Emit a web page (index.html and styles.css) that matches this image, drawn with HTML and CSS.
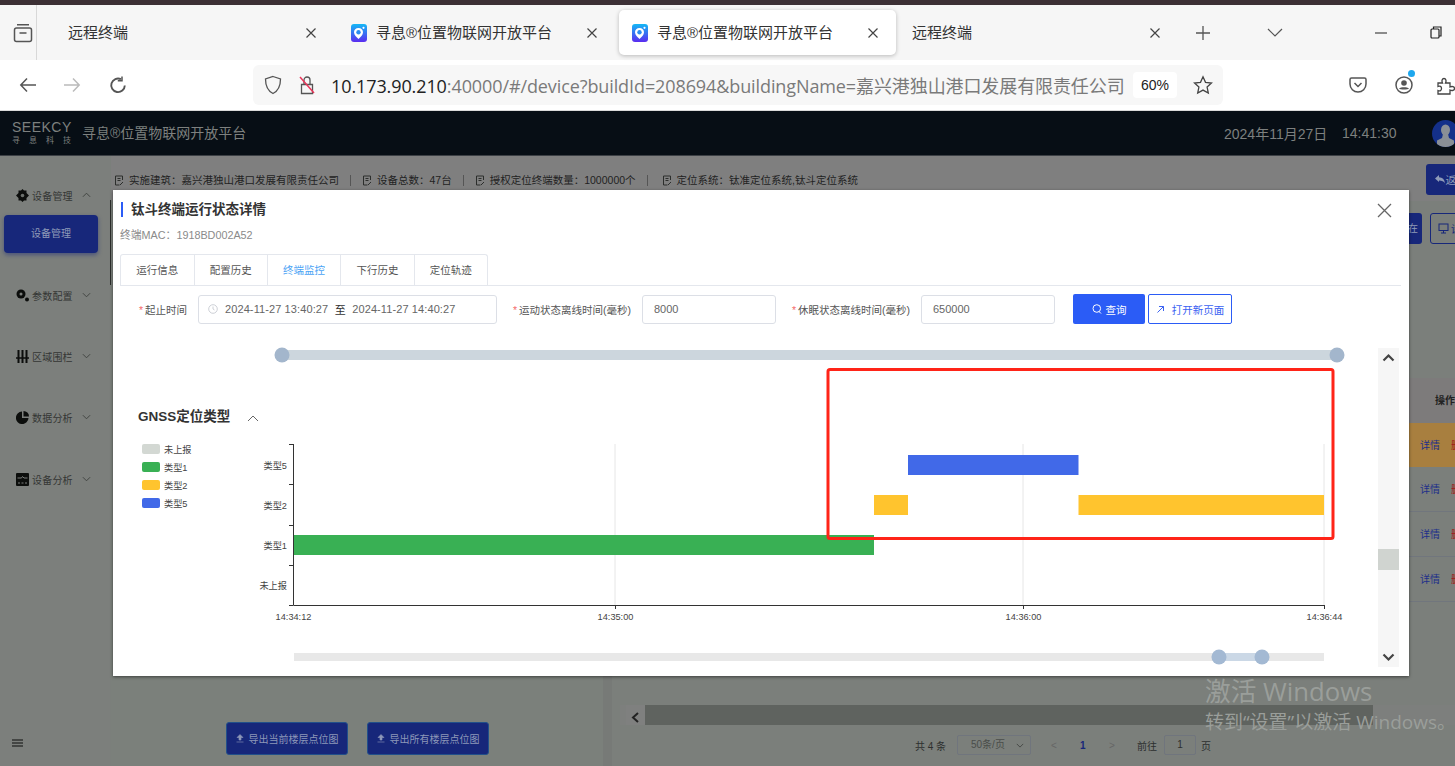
FILE: index.html
```html
<!DOCTYPE html>
<html lang="zh-CN">
<head>
    <meta charset="UTF-8">
    <title>寻息®位置物联网开放平台</title>
    <link rel="stylesheet" href="styles.css">
</head>
<body>
    <svg class="defs" width="0" height="0">
        <defs>
            <linearGradient id="logoGrad" x1="0.5" y1="0" x2="0.5" y2="1">
                <stop offset="0" stop-color="#14b8f5"/>
                <stop offset="1" stop-color="#5a2cf0"/>
            </linearGradient>
            <symbol id="siteLogo" viewBox="0 0 16 18">
                <rect x="0" y="0" width="16" height="18" rx="3" fill="url(#logoGrad)"/>
                <path d="M7.500 4C4.800 4 3 5.900 3 8.300c0 2.700 2.600 4.900 4.500 6.700C9.400 13.200 12 11 12 8.300 12 5.900 10.200 4 7.500 4z" fill="#fff"/>
                <circle cx="7.500" cy="8.300" r="2.200" fill="#2b8df0"/>
                <circle cx="12.500" cy="3.800" r="1.100" fill="#fff"/>
            </symbol>
            <symbol id="closeX" viewBox="0 0 12 12">
                <path d="M1.500 1.500l9 9M10.500 1.500l-9 9" stroke="#444" stroke-width="1.200" fill="none"/>
            </symbol>
            <symbol id="chevDown" viewBox="0 0 10 6">
                <path d="M1 1l4 4 4-4" stroke="#3c3f3c" stroke-width="1" fill="none"/>
            </symbol>
            <symbol id="docIcon" viewBox="0 0 10 11">
                <path d="M1.500 1h7v4M1.500 1v9h4M3.500 3.500h3M3.500 5.500h3M6 10l3-3" stroke="#2c2e2c" fill="none"/>
            </symbol>
        </defs>
    </svg>

    <div class="tabstrip">
        <div class="launcher">
            <svg width="20" height="20" viewBox="0 0 20 20" fill="none" stroke="#555" stroke-width="1.500"><rect x="1.500" y="5" width="17" height="13.500" rx="2"/><path d="M4 1.800h12M6.500 10h7"/></svg>
        </div>
        <div class="tab tab-first">
            <span class="tab-title">远程终端</span>
            <svg class="tab-close" width="12" height="12"><use href="#closeX"/></svg>
        </div>
        <div class="tab tab-second">
            <svg class="tab-logo" width="16" height="18"><use href="#siteLogo"/></svg>
            <span class="tab-title">寻息®位置物联网开放平台</span>
            <svg class="tab-close" width="12" height="12"><use href="#closeX"/></svg>
        </div>
        <div class="tab tab-active">
            <svg class="tab-logo" width="16" height="18"><use href="#siteLogo"/></svg>
            <span class="tab-title">寻息®位置物联网开放平台</span>
            <svg class="tab-close" width="12" height="12"><use href="#closeX"/></svg>
        </div>
        <div class="tab tab-last">
            <span class="tab-title">远程终端</span>
            <svg class="tab-close" width="12" height="12"><use href="#closeX"/></svg>
        </div>
        <svg class="tab-plus" width="16" height="16" viewBox="0 0 16 16"><path d="M8 1v14M1 8h14" stroke="#555" stroke-width="1.300"/></svg>
        <svg class="tab-list" width="16" height="10" viewBox="0 0 16 10"><path d="M1 1l7 7 7-7" stroke="#555" stroke-width="1.200" fill="none"/></svg>
        <svg class="win-min" width="14" height="2" viewBox="0 0 14 2"><path d="M1 1h12" stroke="#444" stroke-width="1.200"/></svg>
        <svg class="win-restore" width="12" height="13" viewBox="0 0 12 13" fill="none" stroke="#222" stroke-width="1.200"><rect x="1" y="3" width="8" height="9" rx="1"/><path d="M3.500 3V1h7.500v9H9"/></svg>
    </div>

    <div class="navbar">
        <svg class="nav-back" width="18" height="16" viewBox="0 0 18 16" fill="none" stroke="#555" stroke-width="1.500"><path d="M17 8H2M8 1.500L1.800 8 8 14.500"/></svg>
        <svg class="nav-forward" width="18" height="16" viewBox="0 0 18 16" fill="none" stroke="#bbb" stroke-width="1.500"><path d="M1 8h15M10 1.500L16.200 8 10 14.500"/></svg>
        <svg class="nav-reload" width="18" height="18" viewBox="0 0 18 18" fill="none" stroke="#555" stroke-width="1.900"><path d="M15.800 9.500A6.800 6.800 0 1 1 12 3.200"/><path d="M13 .5v4.200H8.800" stroke-width="1.500"/></svg>
        <div class="urlbar">
            <svg class="url-shield" width="18" height="20" viewBox="0 0 18 20" fill="none" stroke="#555" stroke-width="1.300"><path d="M9 1.500l7.500 2.500c0 6.500-1.500 11.500-7.500 14.500C3 15.500 1.500 10.500 1.500 4z"/></svg>
            <svg class="url-lock" width="18" height="20" viewBox="0 0 18 20" fill="none"><path d="M3.500 9.500h11v9h-11zM6 9.500V5a3 3 0 0 1 6 0v4.500" stroke="#555" stroke-width="1.300"/><path d="M2 2l14 16" stroke="#e8365a" stroke-width="1.500"/></svg>
            <span class="url-text"><span class="url-host">10.173.90.210</span>:40000/#/device?buildId=208694&amp;buildingName=嘉兴港独山港口发展有限责任公司</span>
            <span class="zoom-chip">60%</span>
            <svg class="url-star" width="20" height="20" viewBox="0 0 20 20" fill="none" stroke="#444" stroke-width="1.300"><path d="M10 1.800l2.500 5.500 6 .7-4.400 4.100 1.200 5.900L10 15.100 4.700 18l1.200-5.900L1.500 8l6-.7z"/></svg>
        </div>
        <svg class="nav-pocket" width="18" height="18" viewBox="0 0 18 18" fill="none" stroke="#555" stroke-width="1.500"><path d="M2.500 2h13A1.500 1.500 0 0 1 17 3.500V8A8 8 0 0 1 1 8V3.500A1.500 1.500 0 0 1 2.500 2z"/><path d="M5.500 7L9 10.500 12.500 7"/></svg>
        <div class="nav-profile">
            <svg width="18" height="18" viewBox="0 0 18 18"><circle cx="9" cy="9" r="8" fill="none" stroke="#555" stroke-width="1.500"/><circle cx="9" cy="7" r="2.800" fill="#555"/><path d="M4 12.500c2-1.800 8-1.800 10 0-1 1.400-9 1.400-10 0z" fill="#555"/></svg>
            <span class="profile-dot"></span>
        </div>
        <svg class="nav-ext" width="20" height="20" viewBox="0 0 20 20" fill="none" stroke="#444" stroke-width="1.300"><path d="M1 8h4.500C4.500 6 5 3.500 7 3.500S9.500 6 8.500 8H13v4c2-1 4.500-.5 4.500 1.500S15 16 13 15v4H1v-3.500c2 1 3.500 0 3.500-2S3 10.500 1 11.500z"/></svg>
    </div>

    <div class="app-header">
        <div class="brand">
            <div class="brand-name">SEEKCY</div>
            <div class="brand-sub">寻息科技</div>
        </div>
        <div class="app-title">寻息®位置物联网开放平台</div>
        <div class="app-date">2024年11月27日</div>
        <div class="app-time">14:41:30</div>
        <div class="avatar">
            <svg width="27" height="27" viewBox="0 0 27 27"><ellipse cx="13.500" cy="10" rx="4.500" ry="5.500" fill="#8a8f96"/><path d="M11 14h5l1 4 5 2.500V27H5v-6.500l5-2.500z" fill="#8a8f96"/></svg>
        </div>
    </div>

    <div class="app-body">
        <aside class="sidebar">
            <div class="side-item side-first">
                <svg class="side-icon" width="13" height="13" viewBox="0 0 13 13"><path d="M6.500 0l1.500 1.500h2.500v2.500L13 6.500 10.500 9v2.500H8L6.500 13 5 11.500H2.500V9L0 6.500 2.500 4V1.500H5z" fill="#0c0e0c"/><circle cx="6.500" cy="6.500" r="1.800" fill="#6c706c"/></svg>
                <span>设备管理</span>
                <svg class="side-chev flip" width="9" height="6"><use href="#chevDown"/></svg>
            </div>
            <div class="side-active">设备管理</div>
            <div class="side-item side-second">
                <svg class="side-icon" width="13" height="13" viewBox="0 0 13 13"><circle cx="5" cy="5" r="4.500" fill="#0c0e0c"/><circle cx="5" cy="5" r="1.500" fill="#7c7f7c"/><circle cx="11" cy="10.500" r="2" fill="#0c0e0c"/></svg>
                <span>参数配置</span>
                <svg class="side-chev" width="9" height="6"><use href="#chevDown"/></svg>
            </div>
            <div class="side-item">
                <svg class="side-icon" width="13" height="13" viewBox="0 0 13 13"><path d="M2.500 0v13M6.500 0v13M10.500 0v13" stroke="#0c0e0c" stroke-width="2"/><path d="M0 8h13" stroke="#0c0e0c" stroke-width="1.500"/></svg>
                <span>区域围栏</span>
                <svg class="side-chev" width="9" height="6"><use href="#chevDown"/></svg>
            </div>
            <div class="side-item">
                <svg class="side-icon" width="13" height="13" viewBox="0 0 13 13"><path d="M6 0.500v6.500h6.500A6.300 6.300 0 1 1 6 .5z" fill="#0c0e0c"/><path d="M7.500 0a5.500 5.500 0 0 1 5.500 5.500H7.500z" fill="#0c0e0c"/></svg>
                <span>数据分析</span>
                <svg class="side-chev" width="9" height="6"><use href="#chevDown"/></svg>
            </div>
            <div class="side-item side-last">
                <svg class="side-icon" width="13" height="13" viewBox="0 0 13 13"><rect width="13" height="13" rx="1" fill="#0c0e0c"/><path d="M1.500 5h4l1-1.500L8 5h3.500M2 10h2M5.500 10h2M9 10h2" stroke="#7c7f7c" fill="none"/></svg>
                <span>设备分析</span>
                <svg class="side-chev" width="9" height="6"><use href="#chevDown"/></svg>
            </div>
            <div class="side-toggle">
                <svg width="11" height="8" viewBox="0 0 11 8"><path d="M0 1h11M0 4h11M0 7h11" stroke="#0c0e0c" stroke-width="1.200"/></svg>
            </div>
        </aside>
        <div class="side-scroll"></div>

        <main class="main">
            <div class="summary">
                <span class="sum-item">
                    <svg width="10" height="11"><use href="#docIcon"/></svg>实施建筑：嘉兴港独山港口发展有限责任公司
                </span>
                <span class="sum-item">
                    <svg width="10" height="11"><use href="#docIcon"/></svg>设备总数：47台
                </span>
                <span class="sum-item">
                    <svg width="10" height="11"><use href="#docIcon"/></svg>授权定位终端数量：1000000个
                </span>
                <span class="sum-item sum-last">
                    <svg width="10" height="11"><use href="#docIcon"/></svg>定位系统：钛准定位系统,钛斗定位系统
                </span>
                <span class="back-btn">
                    <svg width="10" height="9" viewBox="0 0 10 9"><path d="M0 3.500L4 0v2.200c3.500 0 5.500 2 6 6-1.300-2-3-2.800-6-2.800V7z" fill="#8f9bb8"/></svg>返回
                </span>
            </div>

            <div class="panels">
                <section class="left-panel">
                    <span class="export-btn">
                        <svg width="8" height="9" viewBox="0 0 8 9"><path d="M4 .5L1 3.500h2V6h2V3.500h2zM.5 8h7" fill="#8d97b8" stroke="#8d97b8" stroke-width=".6"/></svg>导出当前楼层点位图
                    </span>
                    <span class="export-btn">
                        <svg width="8" height="9" viewBox="0 0 8 9"><path d="M4 .5L1 3.500h2V6h2V3.500h2zM.5 8h7" fill="#8d97b8" stroke="#8d97b8" stroke-width=".6"/></svg>导出所有楼层点位图
                    </span>
                </section>
                <section class="right-panel">
                    <div class="toolbar">
                        <span class="tool-btn tool-solid">在</span>
                        <span class="tool-btn tool-line">
                            <svg width="11" height="11" viewBox="0 0 11 11" fill="none" stroke="#17277a"><rect x="1" y="1" width="9" height="6.500"/><path d="M5.500 7.500V10M3 10h5"/></svg>设备
                        </span>
                    </div>
                    <div class="table">
                        <div class="table-head">操作</div>
                        <div class="table-row row-warn"><span class="link-blue">详情</span><span class="link-red">删除</span></div>
                        <div class="table-row"><span class="link-blue">详情</span><span class="link-red">删除</span></div>
                        <div class="table-row"><span class="link-blue">详情</span><span class="link-red">删除</span></div>
                        <div class="table-row"><span class="link-blue">详情</span><span class="link-red">删除</span></div>
                    </div>
                    <div class="hscroll">
                        <span class="hscroll-btn">
                            <svg width="9" height="11" viewBox="0 0 9 11"><path d="M7 1L2 5.500 7 10" stroke="#222" stroke-width="2" fill="none"/></svg>
                        </span>
                        <span class="hscroll-thumb"></span>
                    </div>
                    <div class="pager">
                        <span class="pager-total">共 4 条</span>
                        <span class="pager-size">50条/页<svg width="8" height="5"><use href="#chevDown"/></svg></span>
                        <span class="pager-prev">&lt;</span>
                        <span class="pager-num">1</span>
                        <span class="pager-next">&gt;</span>
                        <span class="pager-go">前往</span>
                        <span class="pager-input">1</span>
                        <span>页</span>
                    </div>
                </section>
            </div>
        </main>
    </div>

    <div class="modal">
        <div class="modal-title">钛斗终端运行状态详情</div>
        <svg class="modal-close" width="15" height="15" viewBox="0 0 15 15"><path d="M1 1l13 13M14 1L1 14" stroke="#666" stroke-width="1.300"/></svg>
        <div class="modal-mac">终端MAC：1918BD002A52</div>
        <div class="modal-tabs">
            <span class="mtab">运行信息</span>
            <span class="mtab">配置历史</span>
            <span class="mtab mtab-on">终端监控</span>
            <span class="mtab">下行历史</span>
            <span class="mtab">定位轨迹</span>
        </div>
        <div class="query">
            <label class="q-label q-time"><i>*</i>起止时间</label>
            <div class="q-input q-range">
                <svg width="10" height="10" viewBox="0 0 10 10" fill="none" stroke="#c0c4cc" stroke-width=".8"><circle cx="5" cy="5" r="4.300"/><path d="M5 2.500V5l1.500 1"/></svg>
                <span>2024-11-27 13:40:27</span>
                <span class="q-to">至</span>
                <span>2024-11-27 14:40:27</span>
            </div>
            <label class="q-label q-run"><i>*</i>运动状态离线时间(毫秒)</label>
            <div class="q-input q-num">8000</div>
            <label class="q-label q-sleep"><i>*</i>休眠状态离线时间(毫秒)</label>
            <div class="q-input q-num">650000</div>
            <span class="q-btn q-search">
                <svg width="10" height="10" viewBox="0 0 10 10" fill="none" stroke="#fff"><circle cx="4.800" cy="4.500" r="3.800"/><path d="M7 7.500l2 2"/></svg>查询
            </span>
            <span class="q-btn q-open">
                <svg width="9" height="9" viewBox="0 0 9 9" fill="none" stroke="#3a62f2"><path d="M1.500 7.500l6-6M3 1.500h4.500V6"/></svg>打开新页面
            </span>
        </div>
        <div class="modal-scroll">
            <svg class="chart" width="1265" height="327" viewBox="113 340 1265 327">
                <!-- top data zoom -->
                <rect x="282" y="350" width="1055" height="10" fill="#ccd6dd"/>
                <circle cx="282" cy="355" r="7.500" fill="#a3b6cc"/>
                <circle cx="1337" cy="355" r="7.500" fill="#a3b6cc"/>

                <text class="sec-title" x="138" y="421">GNSS定位类型</text>
                <path d="M248 421l5-5 5 5" stroke="#666" fill="none"/>

                <!-- legend -->
                <rect x="142" y="444" width="18" height="10" rx="2" fill="#d3d8d3"/>
                <rect x="142" y="462" width="18" height="10" rx="2" fill="#39b054"/>
                <rect x="142" y="480" width="18" height="10" rx="2" fill="#ffc42e"/>
                <rect x="142" y="498" width="18" height="10" rx="2" fill="#4169e8"/>
                <text class="chart-label" x="164" y="452.500">未上报</text>
                <text class="chart-label" x="164" y="470.500">类型1</text>
                <text class="chart-label" x="164" y="488.500">类型2</text>
                <text class="chart-label" x="164" y="506.500">类型5</text>

                <!-- grid -->
                <path d="M615 444v161M1023 444v161M1324 444v161" stroke="#e6e6e6"/>

                <!-- bars -->
                <rect x="293" y="535" width="581" height="20" fill="#39b054"/>
                <rect x="874" y="495" width="34" height="20" fill="#ffc42e"/>
                <rect x="908" y="455" width="170.500" height="20" fill="#4169e8"/>
                <rect x="1078.500" y="495" width="245.500" height="20" fill="#ffc42e"/>

                <!-- axes -->
                <path d="M293.500 444v161.500H1324M289 444.500h4M289 484.500h4M289 525.500h4M289 565.500h4M289 605.500h4M615.500 605v4M1023.500 605v4M1324.500 605v4" stroke="#333" fill="none"/>
                <text class="chart-label end" x="287" y="468.500">类型5</text>
                <text class="chart-label end" x="287" y="508.500">类型2</text>
                <text class="chart-label end" x="287" y="548.500">类型1</text>
                <text class="chart-label end" x="287" y="588.500">未上报</text>
                <text class="chart-label mid" x="293.500" y="619.500">14:34:12</text>
                <text class="chart-label mid" x="615.500" y="619.500">14:35:00</text>
                <text class="chart-label mid" x="1023.500" y="619.500">14:36:00</text>
                <text class="chart-label mid" x="1324.500" y="619.500">14:36:44</text>

                <!-- bottom data zoom -->
                <rect x="294" y="653" width="1030" height="8" fill="#e8e8e8"/>
                <rect x="1219" y="653" width="43" height="8" fill="#cbd8e6"/>
                <circle cx="1219" cy="657" r="7.500" fill="#a3b9d3"/>
                <circle cx="1262" cy="657" r="7.500" fill="#a3b9d3"/>

                <!-- annotation -->
                <rect x="828" y="369.500" width="505" height="169" rx="2" fill="none" stroke="#ff2418" stroke-width="3"/>
            </svg>
            <div class="vscroll">
                <svg class="vs-arrow" width="13" height="9" viewBox="0 0 13 9"><path d="M1.500 7.500l5-5 5 5" stroke="#444" stroke-width="2.200" fill="none"/></svg>
                <div class="vs-track"><div class="vs-thumb"></div></div>
                <svg class="vs-arrow" width="13" height="9" viewBox="0 0 13 9"><path d="M1.500 1.500l5 5 5-5" stroke="#444" stroke-width="2.200" fill="none"/></svg>
            </div>
        </div>
    </div>

    <div class="watermark">
        <div class="wm-big">激活 Windows</div>
        <div class="wm-small">转到“设置”以激活 Windows。</div>
    </div>
</body>
</html>
```

FILE: styles.css
```css
* {
    box-sizing: border-box;
}
html, body {
    margin: 0;
    height: 766px;
    overflow: hidden;
}
body {
    font-family: "Liberation Sans", "Noto Sans CJK SC", sans-serif;
    background: #7b7f7b;
    border-top: 5px solid #3c3035;
    position: relative;
}
body::before {
    content: "";
    position: absolute;
    left: 25px;
    top: -2px;
    width: 178px;
    height: 2px;
    background: #1fae97;
}
.defs {
    position: absolute;
}

/* browser tabs */
.tabstrip {
    height: 55px;
    background: #f6f6f6;
    display: flex;
    align-items: center;
    font-size: 15px;
    color: #333;
}
.launcher {
    width: 37px;
    height: 55px;
    padding: 18px 0 0 13px;
    border-right: 1px solid #d8d8d8;
    flex: none;
}
.tab {
    display: flex;
    align-items: center;
    flex: none;
    height: 45px;
    white-space: nowrap;
}
.tab-title {
    position: relative;
    top: -1px;
}
.tab-close {
    margin-left: auto;
}
.tab-logo {
    margin-right: 9px;
    flex: none;
}
.tab-first {
    width: 287px;
    padding: 0 7px 0 31px;
}
.tab-second {
    width: 269px;
    margin-left: 13px;
    padding: 0 8px 0 14px;
}
.tab-active {
    width: 277px;
    margin-left: 13px;
    padding: 0 17px 0 13px;
    background: #fff;
    border-radius: 5px;
    box-shadow: 0 1px 4px rgba(0, 0, 0, 0.25);
}
.tab-last {
    width: 272px;
    padding: 0 7px 0 16px;
}
.tab-plus {
    margin-left: 27px;
}
.tab-list {
    margin-left: 56px;
}
.win-min {
    margin-left: 91px;
}
.win-restore {
    margin-left: 42px;
}

/* address bar */
.navbar {
    height: 51px;
    background: #fff;
    border-bottom: 1px solid #d9d9d9;
    display: flex;
    align-items: center;
}
.nav-back {
    margin-left: 19px;
    flex: none;
}
.nav-forward {
    margin-left: 26px;
    flex: none;
}
.nav-reload {
    margin-left: 28px;
    flex: none;
}
.urlbar {
    width: 970px;
    height: 40px;
    margin-left: 126px;
    background: #f7f7f7;
    border-radius: 6px;
    display: flex;
    align-items: center;
    flex: none;
}
.url-shield {
    margin-left: 11px;
}
.url-lock {
    margin-left: 16px;
}
.url-text {
    margin-left: 15px;
    font-family: "Open Sans", "Noto Sans CJK SC", sans-serif;
    font-size: 18px;
    color: #7a7a7a;
    white-space: nowrap;
    width: 792px;
    letter-spacing: -0.1px;
}
.url-host {
    color: #222;
}
.zoom-chip {
    width: 44px;
    height: 26px;
    margin-left: 10px;
    background: #fff;
    border-radius: 4px;
    font-size: 14px;
    line-height: 26px;
    text-align: center;
    color: #222;
}
.url-star {
    margin-left: 16px;
}
.nav-pocket {
    margin-left: 126px;
    flex: none;
}
.nav-profile {
    margin-left: 28px;
    position: relative;
    height: 18px;
    flex: none;
}
.profile-dot {
    position: absolute;
    right: -2px;
    top: -6px;
    width: 7px;
    height: 7px;
    border-radius: 50%;
    background: #1ea7ee;
}
.nav-ext {
    margin-left: 24px;
    flex: none;
}

/* app header */
.app-header {
    height: 45px;
    background: #070e15;
    display: flex;
    align-items: center;
    color: #7d807f;
    position: relative;
    border-bottom: 1px solid #3c4045;
}
.brand {
    margin-left: 12px;
    width: 70px;
    flex: none;
}
.brand-name {
    font-size: 14px;
    line-height: 14px;
    letter-spacing: 0.5px;
}
.brand-sub {
    font-size: 8px;
    line-height: 10px;
    letter-spacing: 9px;
    margin-top: 2px;
}
.app-title {
    font-size: 14px;
    width: 1142px;
    flex: none;
    position: relative;
    top: -1px;
}
.app-date {
    font-size: 14px;
    width: 118px;
    flex: none;
}
.app-time {
    font-size: 14px;
    width: 90px;
    flex: none;
}
.avatar {
    width: 27px;
    height: 27px;
    border-radius: 50%;
    background: #14308a;
    flex: none;
    overflow: hidden;
}

/* app body, greyed by the dialog */
.app-body {
    display: flex;
    height: 610px;
}
.sidebar {
    width: 110px;
    flex: none;
    position: relative;
    background: #7c7f7c;
}
.side-item {
    display: flex;
    align-items: center;
    height: 14px;
    margin-top: 47px;
    padding-left: 16px;
    font-size: 10px;
    color: #343634;
    white-space: nowrap;
}
.side-item span {
    margin-left: 3px;
    letter-spacing: 0.2px;
}
.side-first {
    margin-top: 32px;
}
.side-second {
    margin-top: 35px;
}
.side-last {
    margin-top: 48px;
}
.side-icon {
    flex: none;
}
.side-chev {
    margin-left: 9px;
}
.side-chev.flip {
    transform: rotate(180deg);
}
.side-active {
    width: 94px;
    height: 38px;
    margin: 13px 0 0 4px;
    background: #17277a;
    border-radius: 4px;
    box-shadow: 0 2px 4px rgba(23, 39, 122, 0.5);
    color: #8f9bb8;
    font-size: 10px;
    line-height: 38px;
    text-align: center;
}
.side-toggle {
    position: absolute;
    left: 12px;
    bottom: 15px;
}
.side-scroll {
    width: 3px;
    height: 85px;
    margin: 44px 0 0 -2px;
    background: #2c2e2c;
    flex: none;
}
.main {
    flex: 1;
    min-width: 0;
}
.summary {
    height: 45px;
    padding-top: 4px;
    background: #7f7f7f;
    display: flex;
    align-items: center;
    padding-left: 3px;
    font-size: 10.5px;
    color: #222;
    white-space: nowrap;
}
.sum-item {
    display: flex;
    align-items: center;
    gap: 5px;
    padding-right: 11px;
    margin-right: 11px;
    border-right: 1px solid #555;
    line-height: 11px;
    flex: none;
}
.sum-last {
    border-right: none;
    margin-left: 3px;
    margin-right: 0;
    width: 764px;
}
.back-btn {
    width: 60px;
    height: 31px;
    margin-top: -2px;
    background: #17277a;
    border-radius: 3px;
    color: #8f9bb8;
    display: flex;
    align-items: center;
    gap: 1px;
    padding-left: 9px;
    flex: none;
}
.panels {
    display: flex;
    height: 565px;
    background: #777a77;
}
.left-panel {
    width: 492px;
    flex: none;
    display: flex;
    align-items: flex-end;
    gap: 19px;
    padding: 0 0 11px 115px;
    background: #7b807b;
}
.export-btn {
    width: 122px;
    height: 33px;
    background: #17277a;
    border: 1px solid #22508a;
    border-radius: 3px;
    color: #8d97b8;
    font-size: 10px;
    display: flex;
    align-items: center;
    justify-content: center;
    gap: 5px;
    white-space: nowrap;
}
.right-panel {
    margin-left: 9px;
    padding-left: 8px;
    flex: 1;
    min-width: 0;
    background: #7b7f7b;
}
.toolbar {
    display: flex;
    gap: 8px;
    height: 31px;
    margin-top: 12px;
    padding-left: 752px;
}
.tool-btn {
    height: 31px;
    flex: none;
    font-size: 10px;
    border-radius: 3px;
    white-space: nowrap;
}
.tool-solid {
    width: 50px;
    padding-right: 4px;
    background: #17277a;
    color: #8f9bb8;
    line-height: 31px;
    text-align: right;
}
.tool-line {
    width: 50px;
    display: flex;
    align-items: center;
    gap: 2px;
    padding-left: 7px;
    border: 1px solid #17277a;
    color: #17277a;
}
.tool-line svg {
    flex: none;
}
.table {
    margin-top: 134px;
    font-size: 10px;
}
.table-head {
    height: 45px;
    padding-left: 815px;
    line-height: 45px;
    background: #7d7b7b;
    color: #222;
    font-weight: bold;
    white-space: nowrap;
}
.table-row {
    height: 45px;
    padding-left: 800px;
    line-height: 46px;
    display: flex;
    gap: 11px;
    white-space: nowrap;
    border-bottom: 1px solid #71767d;
}
.row-warn {
    height: 44px;
    background: #a87f3f;
    border-bottom: none;
}
.link-blue {
    color: #1e2f8a;
}
.link-red {
    color: #a11a1a;
}
.hscroll {
    margin-top: 103px;
    height: 20px;
    display: flex;
    background: #7d7f7d;
}
.hscroll-btn {
    width: 19px;
    padding: 4px 0 0 5px;
    margin-left: 6px;
    background: #7f807f;
}
.hscroll-thumb {
    width: 728px;
    background: #5f635f;
}
.pager {
    margin-top: 10px;
    height: 20px;
    display: flex;
    align-items: center;
    font-size: 10px;
    color: #2d2f2f;
    white-space: nowrap;
}
.pager-total {
    margin-left: 295px;
    width: 42px;
}
.pager-size {
    width: 74px;
    height: 20px;
    border: 1px solid #70757d;
    border-radius: 2px;
    padding-left: 13px;
    line-height: 18px;
    color: #4a4d4a;
}
.pager-size svg {
    margin-left: 11px;
}
.pager-prev {
    margin-left: 20px;
    width: 29px;
    color: #666;
}
.pager-num {
    width: 29px;
    color: #17277a;
    font-weight: bold;
}
.pager-next {
    width: 28px;
    color: #666;
}
.pager-go {
    width: 27px;
}
.pager-input {
    width: 32px;
    height: 20px;
    margin-right: 5px;
    border: 1px solid #70757d;
    border-radius: 2px;
    text-align: center;
    line-height: 18px;
}

/* dialog */
.modal {
    position: absolute;
    left: 113px;
    top: 185px;
    width: 1296px;
    height: 486px;
    background: #fff;
    box-shadow: 0 1px 3px rgba(0, 0, 0, 0.5);
}
.modal-title {
    position: absolute;
    left: 8px;
    top: 12px;
    padding-left: 8px;
    border-left: 2px solid #2b5cf6;
    font-size: 13.500px;
    font-weight: bold;
    line-height: 15px;
    color: #333;
}
.modal-close {
    position: absolute;
    right: 17px;
    top: 13px;
}
.modal-mac {
    position: absolute;
    left: 7px;
    top: 39px;
    font-size: 10.800px;
    line-height: 13px;
    color: #8a8a8a;
}
.modal-tabs {
    position: absolute;
    left: 7px;
    top: 64px;
    width: 1281px;
    height: 32px;
    display: flex;
    border-bottom: 1px solid #e4e7ed;
}
.mtab {
    width: 73.400px;
    height: 31px;
    border: 1px solid #e4e7ed;
    border-left: none;
    border-bottom: none;
    font-size: 10.500px;
    line-height: 31px;
    text-align: center;
    color: #555;
}
.mtab:first-child {
    width: 74.500px;
    border-left: 1px solid #e4e7ed;
    border-top-left-radius: 3px;
}
.mtab:last-child {
    border-top-right-radius: 3px;
}
.mtab-on {
    color: #4aa3f5;
}
.query {
    position: absolute;
    left: 0;
    top: 104px;
    width: 100%;
    height: 30px;
    display: flex;
    align-items: center;
    font-size: 10.500px;
    color: #555;
    white-space: nowrap;
}
.q-label {
    flex: none;
}
.q-label i {
    color: #f56c6c;
    font-style: normal;
    margin-right: 2px;
}
.q-time {
    margin-left: 26px;
    width: 59px;
}
.q-run {
    margin-left: 16px;
    width: 129px;
}
.q-sleep {
    margin-left: 16px;
    width: 129px;
}
.q-input {
    height: 29px;
    border: 1px solid #dcdfe6;
    border-radius: 3px;
    display: flex;
    align-items: center;
    color: #666;
    font-size: 11px;
    flex: none;
}
.q-range {
    width: 299px;
    padding-left: 9px;
    letter-spacing: 0.1px;
}
.q-range svg {
    margin-right: 7px;
}
.q-to {
    width: 24px;
    text-align: center;
    color: #333;
}
.q-num {
    width: 134px;
    padding-left: 11px;
}
.q-btn {
    height: 30px;
    display: flex;
    align-items: center;
    justify-content: center;
    gap: 4px;
    border-radius: 2px;
    flex: none;
}
.q-search {
    width: 72px;
    margin-left: 18px;
    background: #2b5cf6;
    color: #fff;
}
.q-open {
    width: 84px;
    margin-left: 3px;
    border: 1px solid #2b5cf6;
    color: #3a62f2;
    gap: 7px;
}
.modal-scroll {
    position: absolute;
    left: 0;
    top: 150px;
    display: flex;
}
.chart {
    display: block;
    flex: none;
}
.chart text {
    font-family: "Liberation Sans", "Noto Sans CJK SC", sans-serif;
}
.chart .sec-title {
    font-size: 13.500px;
    font-weight: bold;
    fill: #333;
}
.chart .chart-label {
    font-size: 9.200px;
    fill: #444;
}
.chart .end {
    text-anchor: end;
}
.chart .mid {
    text-anchor: middle;
}
.vscroll {
    width: 21px;
    height: 319px;
    margin-top: 8px;
    background: #f6f6f6;
    display: flex;
    flex-direction: column;
    align-items: center;
    padding: 5px 0;
}
.vs-track {
    flex: 1;
    width: 100%;
    padding-top: 187px;
}
.vs-thumb {
    height: 21px;
    background: #d0d4d0;
}

.watermark {
    position: absolute;
    left: 1205px;
    top: 672px;
    color: #9a9e9a;
    white-space: nowrap;
    font-family: "Open Sans", "Noto Sans CJK SC", sans-serif;
}
.wm-big {
    font-size: 25.700px;
    line-height: 30px;
}
.wm-small {
    font-size: 19px;
    line-height: 30px;
}
```
